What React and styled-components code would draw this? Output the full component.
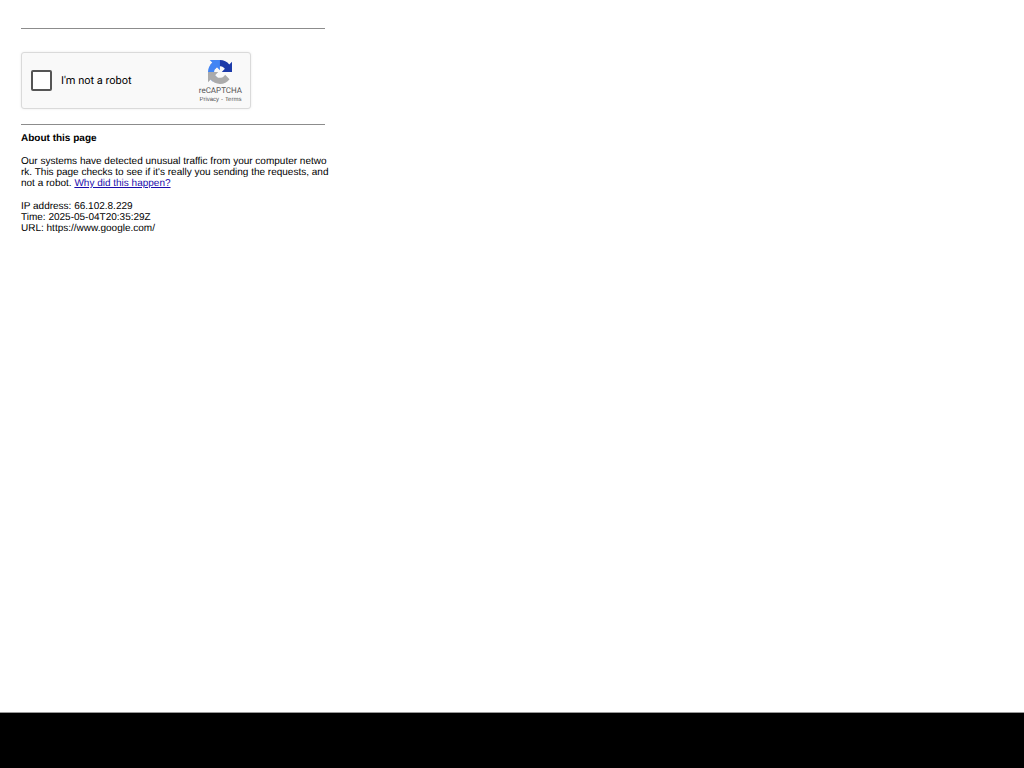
import styled, { createGlobalStyle } from "styled-components";

const GlobalStyle = createGlobalStyle`
  * {
    box-sizing: border-box;
  }
  body {
    margin: 0;
    background: #fff;
    color: #000;
    font-family: "Liberation Sans", Arial, sans-serif;
    font-size: 10px;
    line-height: 11px;
    text-rendering: geometricPrecision;
  }
`;

const Page = styled.div`
  min-height: 100vh;
  display: flex;
  flex-direction: column;
`;

const Main = styled.main`
  flex: 1;
  width: 100%;
  max-width: 346px;
  padding: 28px 21px;
`;

const Rule = styled.hr`
  height: 1px;
  margin: 0;
  border: none;
  background: #8c8c8c;
`;

const Captcha = styled.form`
  display: flex;
  align-items: center;
  justify-content: space-between;
  width: 230px;
  height: 57px;
  margin: 23px 0 15px;
  padding: 0 8px 1px 9px;
  border: 1px solid #dadada;
  border-radius: 3px;
  background: #f9f9f9;
  box-shadow: 0 0 3px rgba(0, 0, 0, 0.08);
`;

const CheckLabel = styled.label`
  display: flex;
  align-items: center;
  gap: 9px;
  font-family: Roboto, sans-serif;
  font-size: 11px;
  line-height: 13px;
  cursor: pointer;
`;

const Checkbox = styled.input`
  appearance: none;
  width: 21px;
  height: 21px;
  margin: 0;
  border: 2px solid #555;
  border-radius: 2px;
  background: #fff;
  cursor: pointer;
`;

const Brand = styled.div`
  display: flex;
  flex-direction: column;
  align-items: center;
  padding-top: 4px;
  color: #555;
`;

const BrandName = styled.div`
  margin-top: 2px;
  font-family: Roboto, sans-serif;
  font-size: 8px;
  line-height: 10px;
`;

const BrandLinks = styled.div`
  display: flex;
  gap: 2px;
  font-size: 6px;
  line-height: 8px;
`;

const BrandLink = styled.a`
  color: inherit;
  text-decoration: none;
`;

const Title = styled.h1`
  margin: 8px 0 12px;
  font-size: 10px;
  line-height: 11px;
`;

const Paragraph = styled.p`
  margin: 0 -4px 12px 0;
  word-break: break-all;
`;

const HelpLink = styled.a`
  color: #1a0dab;
  text-decoration: underline;
`;

const Footer = styled.footer`
  height: 56px;
  border-top: 1px solid #999;
  background: #000;
`;

const Logo = () => (
  <svg width="24" height="24" viewBox="0 0 64 64" aria-hidden="true">
    <path
      fill="#1c3aa9"
      d="M64 31.955l-.033-1.37V4.687l-7.16 7.16C50.948 4.674 42.033.093 32.05.093c-10.4 0-19.622 4.96-25.458 12.64l11.736 11.86a15.55 15.55 0 0 1 4.754-5.334c2.05-1.6 4.952-2.906 8.968-2.906.485 0 .86.057 1.135.163 4.976.393 9.288 3.14 11.828 7.124l-8.307 8.307L64 31.953"
    />
    <path
      fill="#4285f4"
      d="M31.862.094l-1.37.033H4.594l7.16 7.16C4.58 13.147 0 22.06 0 32.046c0 10.4 4.96 19.622 12.64 25.458L24.5 45.768a15.55 15.55 0 0 1-5.334-4.754c-1.6-2.05-2.906-4.952-2.906-8.968 0-.485.057-.86.163-1.135.393-4.976 3.14-9.288 7.124-11.828l8.307 8.307L31.86.095"
    />
    <path
      fill="#ababab"
      d="M.001 32.045l.033 1.37v25.898l7.16-7.16c5.86 7.173 14.774 11.754 24.76 11.754 10.4 0 19.622-4.96 25.458-12.64l-11.736-11.86a15.55 15.55 0 0 1-4.754 5.334c-2.05 1.6-4.952 2.906-8.968 2.906-.485 0-.86-.057-1.135-.163-4.976-.393-9.288-3.14-11.828-7.124l8.307-8.307c-10.522.04-22.4.066-27.295-.005"
    />
  </svg>
);

const App = () => {
  return (
    <Page>
      <GlobalStyle />
      <Main>
        <Rule />
        <Captcha>
          <CheckLabel htmlFor="robot">
            <Checkbox type="checkbox" id="robot" />
            I'm not a robot
          </CheckLabel>
          <Brand>
            <Logo />
            <BrandName>reCAPTCHA</BrandName>
            <BrandLinks>
              <BrandLink href="#privacy">Privacy</BrandLink>
              <span>-</span>
              <BrandLink href="#terms">Terms</BrandLink>
            </BrandLinks>
          </Brand>
        </Captcha>
        <Rule />
        <Title>About this page</Title>
        <Paragraph>
          Our systems have detected unusual traffic from your computer network.
          This page checks to see if it's really you sending the requests, and
          not a robot. <HelpLink href="#why">Why did this happen?</HelpLink>
        </Paragraph>
        <Paragraph>
          IP address: 66.102.8.229
          <br />
          Time: 2025-05-04T20:35:29Z
          <br />
          URL: https://www.google.com/
        </Paragraph>
      </Main>
      <Footer />
    </Page>
  );
};

export default App;
